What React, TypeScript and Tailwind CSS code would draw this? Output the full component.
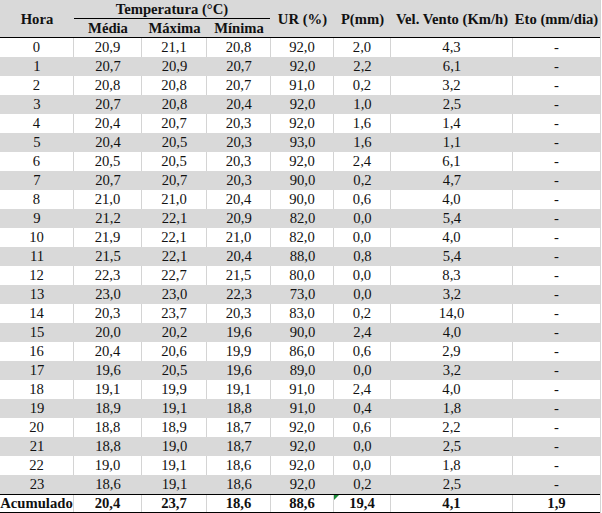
import React from 'react';

const rows: string[][] = [
  ['0', '20,9', '21,1', '20,8', '92,0', '2,0', '4,3', '-'],
  ['1', '20,7', '20,9', '20,7', '92,0', '2,2', '6,1', '-'],
  ['2', '20,8', '20,8', '20,7', '91,0', '0,2', '3,2', '-'],
  ['3', '20,7', '20,8', '20,4', '92,0', '1,0', '2,5', '-'],
  ['4', '20,4', '20,7', '20,3', '92,0', '1,6', '1,4', '-'],
  ['5', '20,4', '20,5', '20,3', '93,0', '1,6', '1,1', '-'],
  ['6', '20,5', '20,5', '20,3', '92,0', '2,4', '6,1', '-'],
  ['7', '20,7', '20,7', '20,3', '90,0', '0,2', '4,7', '-'],
  ['8', '21,0', '21,0', '20,4', '90,0', '0,6', '4,0', '-'],
  ['9', '21,2', '22,1', '20,9', '82,0', '0,0', '5,4', '-'],
  ['10', '21,9', '22,1', '21,0', '82,0', '0,0', '4,0', '-'],
  ['11', '21,5', '22,1', '20,4', '88,0', '0,8', '5,4', '-'],
  ['12', '22,3', '22,7', '21,5', '80,0', '0,0', '8,3', '-'],
  ['13', '23,0', '23,0', '22,3', '73,0', '0,0', '3,2', '-'],
  ['14', '20,3', '23,7', '20,3', '83,0', '0,2', '14,0', '-'],
  ['15', '20,0', '20,2', '19,6', '90,0', '2,4', '4,0', '-'],
  ['16', '20,4', '20,6', '19,9', '86,0', '0,6', '2,9', '-'],
  ['17', '19,6', '20,5', '19,6', '89,0', '0,0', '3,2', '-'],
  ['18', '19,1', '19,9', '19,1', '91,0', '2,4', '4,0', '-'],
  ['19', '18,9', '19,1', '18,8', '91,0', '0,4', '1,8', '-'],
  ['20', '18,8', '18,9', '18,7', '92,0', '0,6', '2,2', '-'],
  ['21', '18,8', '19,0', '18,7', '92,0', '0,0', '2,5', '-'],
  ['22', '19,0', '19,1', '18,6', '92,0', '0,0', '1,8', '-'],
  ['23', '18,6', '19,1', '18,6', '92,0', '0,2', '2,5', '-'],
];

const total = ['Acumulado', '20,4', '23,7', '18,6', '88,6', '19,4', '4,1', '1,9'];

const cols = 'grid grid-cols-[74px_68px_65px_64px_63px_57px_122px_87px]';

export default function App() {
  return (
    <div className="h-[513px] w-[602px] overflow-hidden bg-white [font-family:Liberation_Serif,serif] text-[14.67px] text-[#111]">
      <div className="w-[601px] border-r border-[#d4d4d4]">
        {/* header */}
        <div className={`${cols} h-[38px] border-b border-black bg-[#d9d9d9] font-bold`}>
          <div className="row-span-2 flex items-center justify-center">Hora</div>
          <div className="col-span-3 mr-[1px] flex h-[19px] items-center justify-center border-b border-black leading-none">
            Temperatura (°C)
          </div>
          <div className="row-span-2 flex items-center justify-center">UR (%)</div>
          <div className="row-span-2 flex items-center justify-center">P(mm)</div>
          <div className="row-span-2 flex items-center justify-center">Vel. Vento (Km/h)</div>
          <div className="row-span-2 flex items-center justify-center">Eto (mm/dia)</div>
          <div className="flex h-[18px] items-center justify-center leading-none">Média</div>
          <div className="flex h-[18px] items-center justify-center leading-none">Máxima</div>
          <div className="flex h-[18px] items-center justify-center leading-none">Mínima</div>
        </div>

        {/* data */}
        {rows.map((r, i) => (
          <div key={r[0]} className={`${cols} h-[19px] ${i % 2 ? 'bg-[#d9d9d9]' : 'bg-white'}`}>
            {r.map((v, j) => (
              <div
                key={j}
                className={`flex items-center justify-center leading-none ${
                  i % 2 === 0 && j < 7 ? 'border-r border-[#d4d4d4]' : ''
                }`}
              >
                {v}
              </div>
            ))}
          </div>
        ))}

        {/* total */}
        <div className={`${cols} h-[19px] border-y border-black bg-white font-bold`}>
          {total.map((v, j) => (
            <div
              key={j}
              className={`relative flex items-center justify-center leading-none ${
                j < 7 ? 'border-r border-[#d4d4d4]' : ''
              }`}
            >
              {j === 5 && (
                <span className="absolute left-0 top-0 h-0 w-0 border-r-[5px] border-t-[5px] border-r-transparent border-t-[#1e8a3a]" />
              )}
              {v}
            </div>
          ))}
        </div>
      </div>
    </div>
  );
}
